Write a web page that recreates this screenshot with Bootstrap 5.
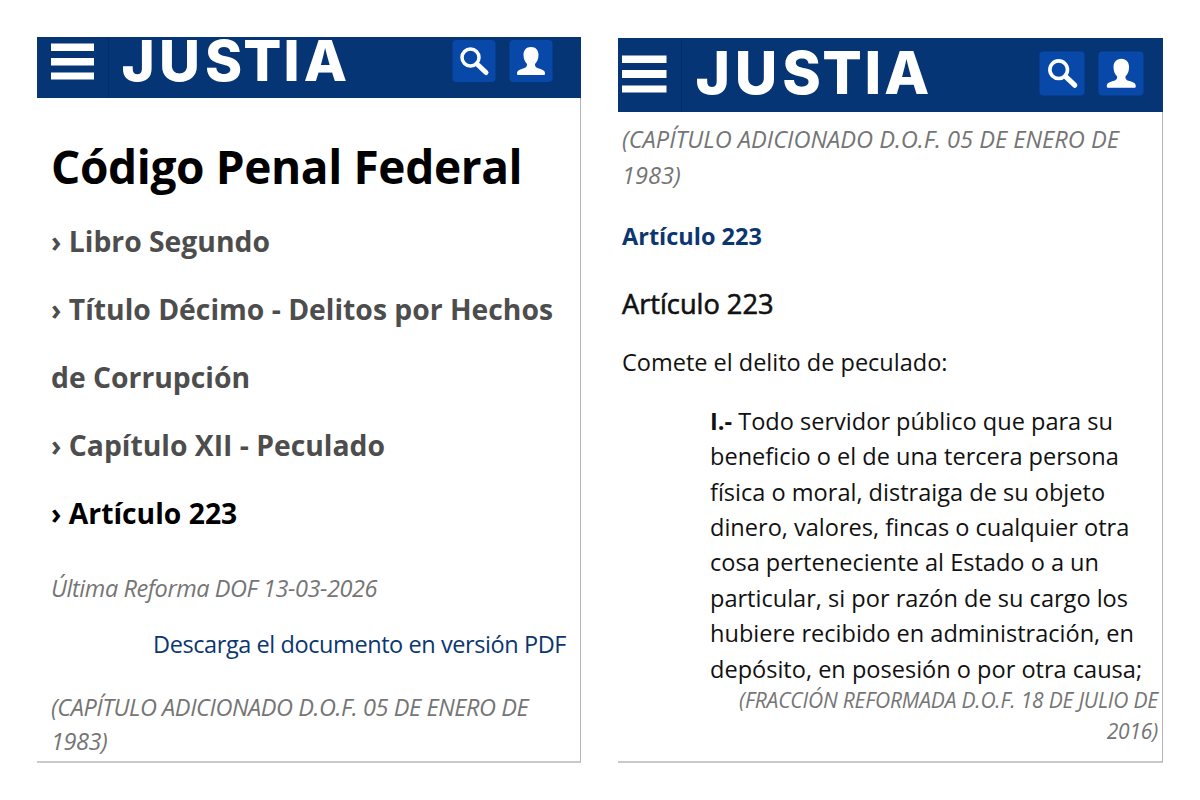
<!DOCTYPE html>
<html lang="es">
<head>
    <meta charset="UTF-8">
    <title>Código Penal Federal</title>
    <link href="https://cdn.jsdelivr.net/npm/bootstrap@5.3.0/dist/css/bootstrap.min.css" rel="stylesheet">
    <style>
        body { font-family: "Open Sans", sans-serif; color: #111; }
        .screens { width: 1200px; height: 800px; padding: 37px; gap: 37px; }
        .screen { width: 544px; height: 726px; }
        .screen-b { width: 545px; height: 725px; margin-top: 1px; }
        .topbar { height: 61px; background: #063576; flex: none; }
        .screen-b .topbar { height: 74px; }
        .topbar svg { display: block; width: 544px; height: 100%; overflow: visible; }
        .brand { font-family: "Inter", sans-serif; font-weight: 800; }
        .content { border-right: 1px solid #b4b4b8; border-bottom: 2px solid #cacaca; white-space: nowrap; }
        .screen-a .content { padding: 33.5px 14px 0; }
        .screen-b .content { padding: 10px 4px 0; }
        .title { font-size: 46px; line-height: 68px; letter-spacing: -.38px; color: #000; }
        .crumbs { font-size: 28.3px; line-height: 68px; color: #4d4d4d; margin-top: 7.5px; }
        .crumbs .current { color: #000; }
        .reform { font-size: 23.5px; line-height: 34px; letter-spacing: -.43px; color: #757575; margin-top: 23.5px; }
        .pdf { font-size: 23.5px; line-height: 34px; letter-spacing: -.42px; margin-top: 22.5px; }
        .pdf a, .art-link a { color: #0b3670; }
        .added { font-size: 23.5px; line-height: 34.5px; letter-spacing: -.42px; color: #757575; }
        .screen-a .added { margin-top: 28.5px; }
        .screen-b .added { font-size: 23.6px; line-height: 35.5px; letter-spacing: 0; }
        .art-link { font-size: 23.5px; line-height: 35px; margin-top: 25.6px; }
        .art-title { font-size: 27.2px; line-height: 36px; margin-top: 32.5px; font-weight: 400; -webkit-text-stroke: .6px #111; }
        .intro { font-size: 23.5px; line-height: 35px; margin-top: 22.5px; }
        .fraction { font-size: 23.55px; line-height: 35.4px; margin: 24.2px 0 0 88px; }
        .fraction-note { font-size: 21px; line-height: 31px; letter-spacing: -.19px; color: #757575; margin-top: -1.6px; }
    </style>
</head>
<body class="bg-white">
<div class="screens d-flex">
    <div class="screen screen-a d-flex flex-column">
        <header class="topbar">
            <svg viewBox="0 0 544 61">
                <path d="M71.500 1v60" stroke="#042c66"/>
                <path d="M14 6.500h43v7.500H14zM14 21h43v7.500H14zM14 35.500h43v7H14z" fill="#fff"/>
                <text class="brand" y="44.300" x="84.600 121.900 168 206.300 246.500 266.700" font-size="56.300" fill="#fff">JUSTIA</text>
                <rect x="415.500" y="3" width="43" height="42" rx="4" fill="#0848a8"/>
                <rect x="472.500" y="3" width="43" height="42" rx="4" fill="#0848a8"/>
                <g id="icons">
                    <circle cx="433.500" cy="20.500" r="8.500" fill="none" stroke="#fff" stroke-width="3.500"/>
                    <path d="M440 27l9 8.500" stroke="#fff" stroke-width="5" stroke-linecap="round"/>
                    <path d="M494 10c-5 0-7.500 3.500-7.500 8 0 4 1.500 7 3.500 9 0 3-1 3.500-4 4.500-4 1.500-6 2-6 5 0 1 .5 1.500 1.500 1.500h25c1 0 1.500-.5 1.500-1.500 0-3-2-3.500-6-5-3-1-4-1.500-4-4.500 2-2 3.500-5 3.500-9 0-4.500-2.500-8-7.500-8z" fill="#fff"/>
                </g>
            </svg>
        </header>
        <main class="content flex-grow-1">
            <h1 class="title fw-bold mb-0">Código Penal Federal</h1>
            <div class="crumbs fw-bold">
                <div>› Libro Segundo</div>
                <div>› Título Décimo - Delitos por Hechos<br>de Corrupción</div>
                <div>› Capítulo XII - Peculado</div>
                <div class="current">› Artículo 223</div>
            </div>
            <p class="reform fst-italic mb-0">Última Reforma DOF 13-03-2026</p>
            <p class="pdf text-end mb-0"><a href="#" class="text-decoration-none">Descarga el documento en versión PDF</a></p>
            <p class="added fst-italic mb-0">(CAPÍTULO ADICIONADO D.O.F. 05 DE ENERO DE<br>1983)</p>
        </main>
    </div>
    <div class="screen screen-b d-flex flex-column">
        <header class="topbar">
            <svg viewBox="0 0 544 74">
                <path d="M63.500 1v73" stroke="#042c66"/>
                <path d="M4 17.500h44.500v7.500H4zM4 32h44.500v8H4zM4 47.500h44.500v7H4z" fill="#fff"/>
                <text class="brand" y="56.300" x="77.500 116.800 164.200 204.200 246.400 266.300" font-size="58.500" fill="#fff">JUSTIA</text>
                <rect x="421.500" y="13.500" width="45" height="44" rx="4" fill="#0848a8"/>
                <rect x="480.500" y="13.500" width="45" height="44" rx="4" fill="#0848a8"/>
                <use href="#icons" transform="translate(-8 10.500) scale(1.035)"/>
            </svg>
        </header>
        <main class="content flex-grow-1">
            <p class="added fst-italic mb-0">(CAPÍTULO ADICIONADO D.O.F. 05 DE ENERO DE<br>1983)</p>
            <p class="art-link fw-bold mb-0"><a href="#" class="text-decoration-none">Artículo 223</a></p>
            <h2 class="art-title mb-0">Artículo 223</h2>
            <p class="intro mb-0">Comete el delito de peculado:</p>
            <p class="fraction"><b>I.-</b> Todo servidor público que para su<br>beneficio o el de una tercera persona<br>física o moral, distraiga de su objeto<br>dinero, valores, fincas o cualquier otra<br>cosa perteneciente al Estado o a un<br>particular, si por razón de su cargo los<br>hubiere recibido en administración, en<br>depósito, en posesión o por otra causa;</p>
            <p class="fraction-note fst-italic text-end mb-0">(FRACCIÓN REFORMADA D.O.F. 18 DE JULIO DE<br>2016)</p>
        </main>
    </div>
</div>
<script src="https://cdn.jsdelivr.net/npm/bootstrap@5.3.0/dist/js/bootstrap.bundle.min.js"></script>
</body>
</html>
